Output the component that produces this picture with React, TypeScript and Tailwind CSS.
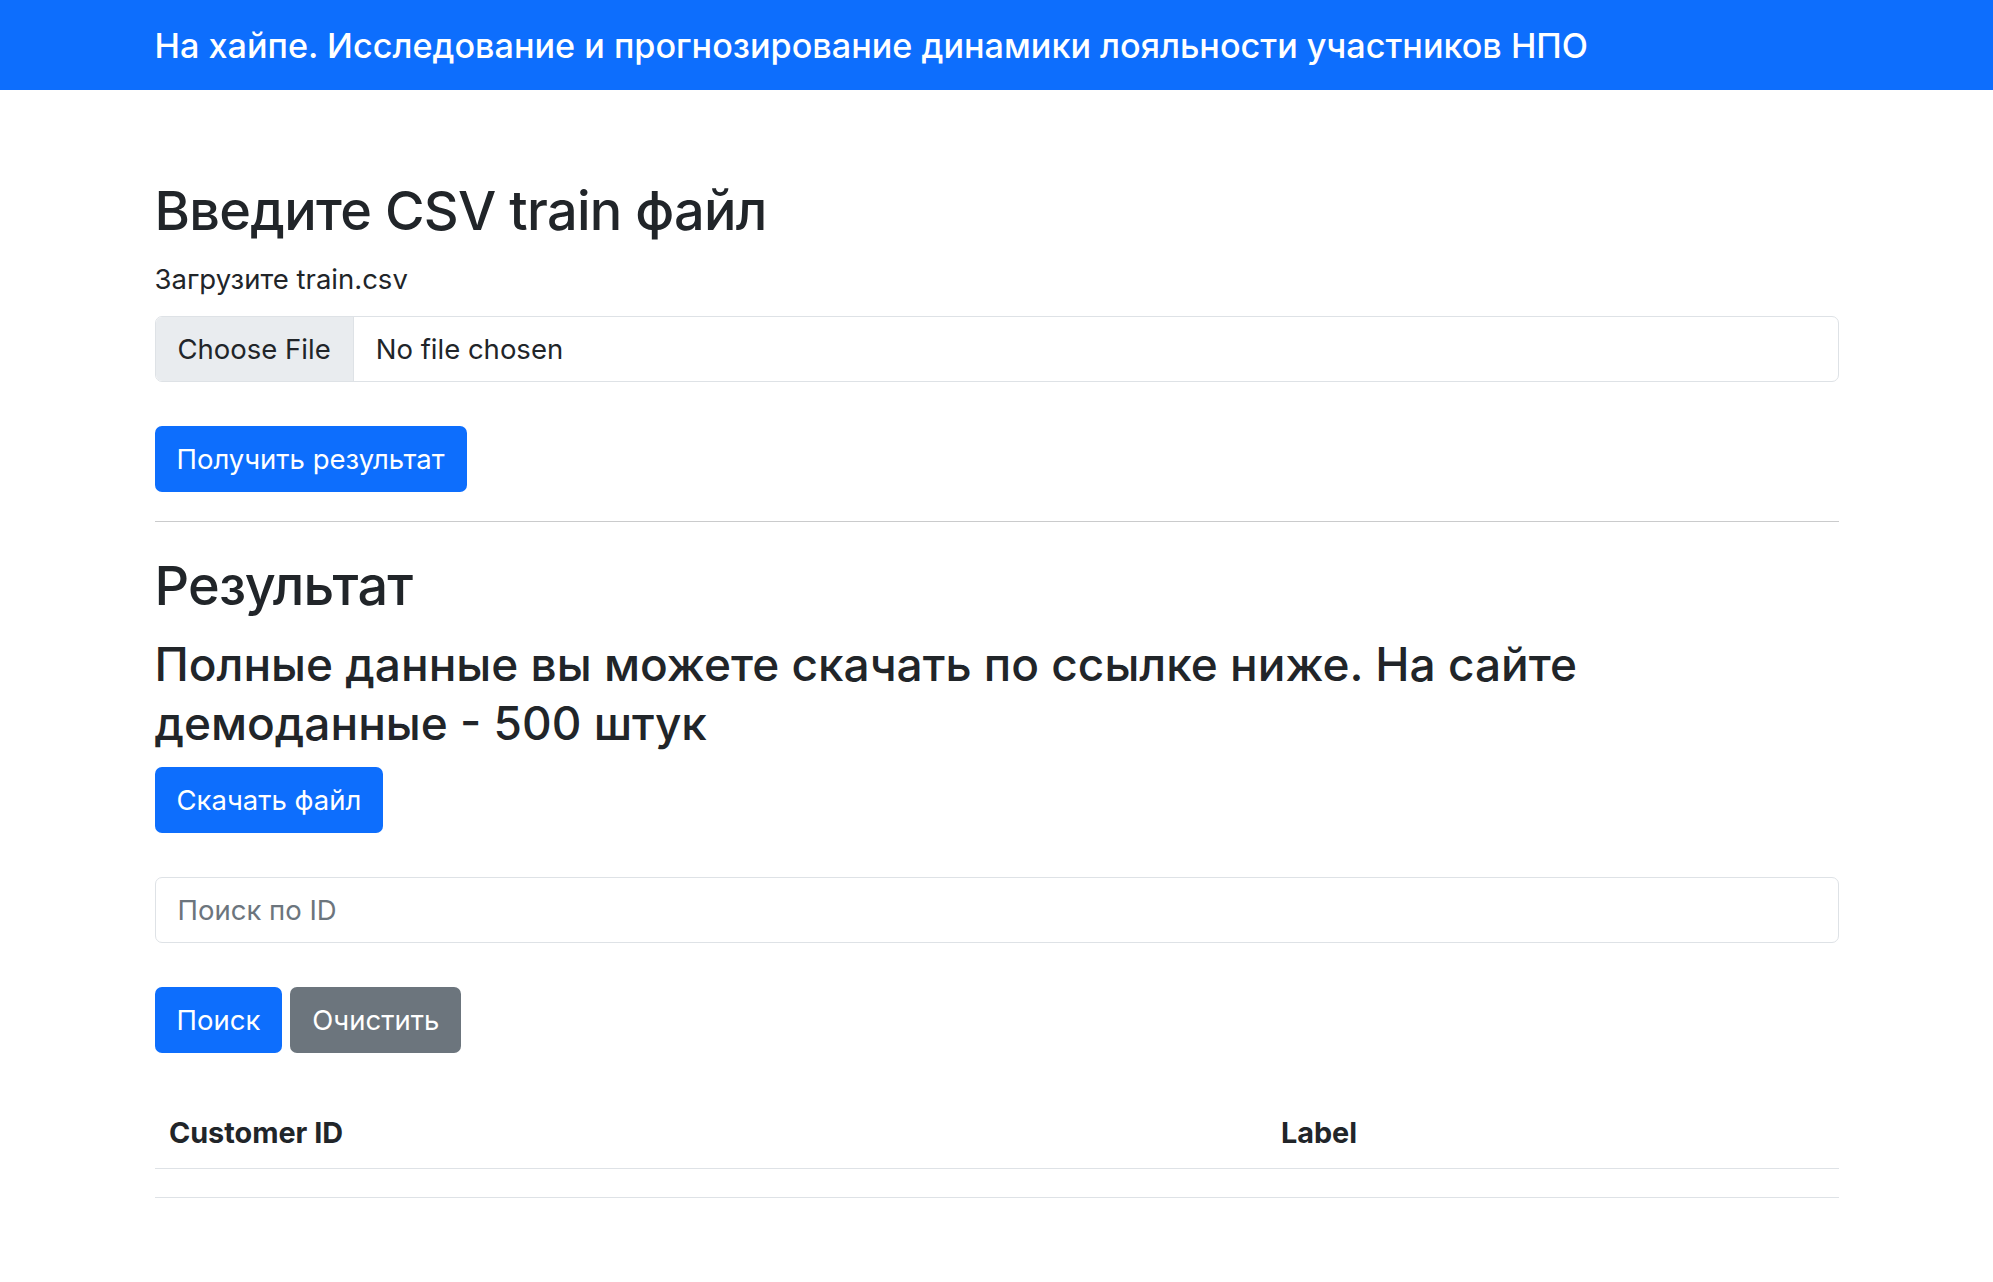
import { useState, ChangeEventHandler } from 'react';

const font = { fontFamily: 'Inter, "Noto Sans", "Liberation Sans", sans-serif' };

type Row = { id: string; label: string };

export default function App() {
  const [fileName, setFileName] = useState('');
  const [query, setQuery] = useState('');
  const [rows] = useState<Row[]>([]);

  const handleFile: ChangeEventHandler<HTMLInputElement> = (e) => {
    const file = e.currentTarget.files?.[0];
    setFileName(file ? file.name : '');
  };

  const shown = query ? rows.filter((r) => r.id.includes(query)) : rows;

  return (
    <div className="min-h-screen bg-white text-[#212529]" style={font}>
      <header className="h-[90px] bg-[#0d6efd] flex items-center">
        <div className="w-[1684px] mx-auto text-white text-[34.2px] leading-[51px] font-medium">
          На хайпе. Исследование и прогнозирование динамики лояльности участников НПО
        </div>
      </header>

      <main className="w-[1684px] mx-auto pt-[87px] pb-16">
        <h2 className="text-[54px] leading-[67px] font-medium tracking-[-0.7px]">Введите CSV train файл</h2>
        <label className="block mt-[14px] text-[27.5px] leading-[43.2px]">Загрузите train.csv</label>

        <label className="mt-[15px] h-[66px] flex border border-[#dee2e6] rounded-[7px] overflow-hidden text-[27.5px] cursor-pointer">
          <span className="bg-[#e9ecef] border-r border-[#dee2e6] px-[22px] flex items-center">Choose File</span>
          <span className="px-[22px] flex items-center">{fileName || 'No file chosen'}</span>
          <input type="file" className="hidden" onChange={handleFile} />
        </label>

        <button className="mt-[44px] h-[66px] px-[22px] bg-[#0d6efd] text-white text-[27.5px] rounded-[7px]">
          Получить результат
        </button>

        <hr className="mt-[29px] border-0 h-px bg-[#cacbcc]" />

        <h2 className="mt-[30px] text-[54px] leading-[67px] font-medium tracking-[-0.7px]">Результат</h2>
        <h3 className="mt-[16px] text-[46px] leading-[59px] font-medium w-[1500px]">
          Полные данные вы можете скачать по ссылке ниже. На сайте демоданные - 500 штук
        </h3>
        <button className="mt-[14px] h-[66px] px-[22px] bg-[#0d6efd] text-white text-[27.5px] rounded-[7px]">
          Скачать файл
        </button>

        <input
          value={query}
          onChange={(e) => setQuery(e.target.value)}
          placeholder="Поиск по ID"
          className="block mt-[44px] w-full h-[66px] px-[22px] border border-[#dee2e6] rounded-[7px] text-[27.5px] placeholder:text-[#6c757d] outline-none"
        />

        <div className="mt-[44px] flex gap-[8px]">
          <button className="h-[66px] px-[22px] bg-[#0d6efd] text-white text-[27.5px] rounded-[7px]">Поиск</button>
          <button
            onClick={() => setQuery('')}
            className="h-[66px] px-[22px] bg-[#6c757d] text-white text-[27.5px] rounded-[7px]"
          >
            Очистить
          </button>
        </div>

        <table className="mt-[43px] w-full border-collapse text-[28.8px] leading-[43.2px]">
          <thead>
            <tr className="border-b border-[#dee2e6]">
              <th className="w-[1112px] text-left font-bold px-[14.4px] py-[14.4px]">Customer ID</th>
              <th className="text-left font-bold px-[14.4px] py-[14.4px]">Label</th>
            </tr>
          </thead>
          <tbody>
            {shown.length === 0 && (
              <tr className="border-b border-[#dee2e6]">
                <td className="h-[29px] p-0" />
                <td className="h-[29px] p-0" />
              </tr>
            )}
            {shown.map((r) => (
              <tr key={r.id} className="border-b border-[#dee2e6]">
                <td className="px-[14.4px] py-[14.4px]">{r.id}</td>
                <td className="px-[14.4px] py-[14.4px]">{r.label}</td>
              </tr>
            ))}
          </tbody>
        </table>
      </main>
    </div>
  );
}
